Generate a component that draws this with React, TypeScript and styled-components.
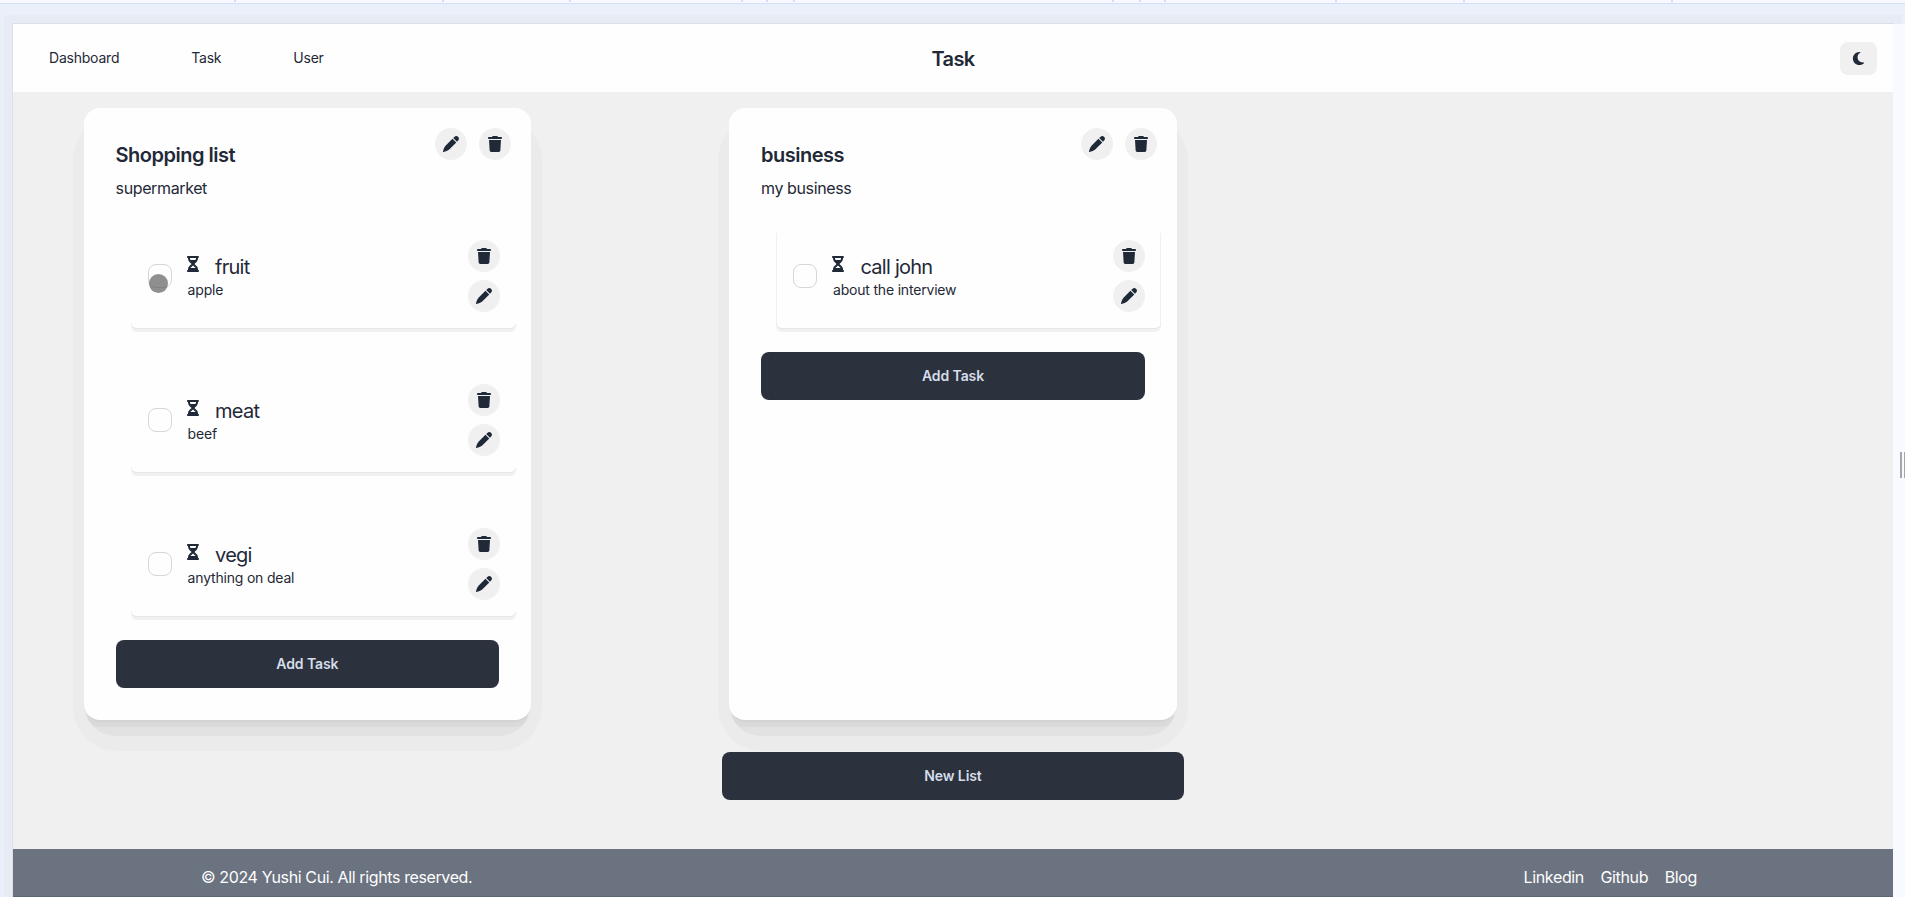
import React from "react";
import styled, { createGlobalStyle, css } from "styled-components";
import { FaTrash, FaHourglassHalf, FaMoon } from "react-icons/fa6";

const GlobalStyle = createGlobalStyle`
  *, *::before, *::after { box-sizing: border-box; }
  body {
    margin: 0;
    background: #eaf0fa;
    color: #1f2937;
    font-family: Inter, "Liberation Sans", sans-serif;
    font-size: 16px;
    line-height: 24px;
    overflow: hidden;
  }
  h1, h2, h3, p { margin: 0; }
  button { font: inherit; color: inherit; border: 0; padding: 0; cursor: pointer; }
  svg { display: block; }
`;

const Page = styled.div`
  height: 897px;
  display: flex;
  flex-direction: column;
`;

const RulerStrip = styled.svg`
  flex: none;
  width: 1905px;
  height: 4px;
`;

const Stage = styled.div`
  flex: 1;
  min-height: 0;
  display: flex;
  padding-top: 20px;
`;

const Screen = styled.div`
  width: 1880px;
  margin-left: 13px;
  height: 873px;
  display: flex;
  flex-direction: column;
  background: #f0f0f0;
  box-shadow: 0 0 0 1px #dbdfe6, 0 0 0 9px #e7ecf4;
`;

const ResizeGutter = styled.div`
  position: relative;
  flex: 1;
  display: flex;
  align-items: center;
  justify-content: flex-end;
  gap: 2px;
  padding-top: 9px;
  background: #f8faff;
`;

const GripBar = styled.span<{ $width: number }>`
  width: ${(p) => p.$width}px;
  height: 26px;
  background: #a6a6a6;
`;

const Header = styled.header`
  flex: none;
  height: 68px;
  display: grid;
  grid-template-columns: 1fr auto 1fr;
  align-items: center;
  padding: 0 16px 0 36px;
  background: #fefefe;
`;

const Nav = styled.nav`
  display: flex;
  gap: 72px;
  font-size: 14px;
  line-height: 20px;
  letter-spacing: -0.22px;
`;

const PageTitle = styled.h1`
  padding-top: 1px;
  font-size: 20px;
  line-height: 28px;
  font-weight: 600;
  letter-spacing: -0.6px;
  margin-left: -20px;
`;

const ThemeButton = styled.button`
  justify-self: end;
  width: 37px;
  height: 33px;
  display: grid;
  place-items: center;
  border-radius: 8px;
  background: #f0f0f0;
`;

const Board = styled.main`
  flex: none;
  height: 757px;
  padding-top: 16px;
`;

const Columns = styled.div`
  display: grid;
  grid-template-columns: 447.6px 448px;
  column-gap: 197.8px;
  padding-left: 70.6px;
`;

const CardShell = styled.section`
  position: relative;
  isolation: isolate;
  height: 612px;

  &::before,
  &::after {
    content: "";
    position: absolute;
    z-index: -1;
  }
  &::before {
    inset: 8px -11px -31px;
    border-radius: 44px;
    background: #ebebeb;
  }
  &::after {
    inset: 40px 0 -16px;
    border-radius: 32px;
    background: #e2e2e2;
  }
`;

const CardBody = styled.div`
  height: 100%;
  padding: 32px;
  border-radius: 16px;
  background: #fefefe;
  box-shadow: 0 5px 0 -3px #d3d3d3, 0 10px 0 -3px #dadada;
`;

const CardHeader = styled.div`
  display: flex;
  justify-content: space-between;
  align-items: flex-start;
  height: 32px;
`;

const CardTitle = styled.h2`
  padding-top: 1px;
  font-size: 20px;
  line-height: 28px;
  font-weight: 600;
  letter-spacing: -0.5px;
`;

const CardActions = styled.div`
  display: flex;
  gap: 12px;
  margin: -12px -12px 0 0;
`;

const CircleButton = styled.button`
  width: 32px;
  height: 32px;
  display: grid;
  place-items: center;
  border-radius: 50%;
  background: #f0f0f0;
`;

const CardSubtitle = styled.p`
  margin-top: 4px;
  letter-spacing: -0.38px;
`;

const TaskList = styled.div`
  display: flex;
  flex-direction: column;
  gap: 40px;
  width: 385px;
  margin: 24px 0 24px 15.5px;
`;

const TaskItem = styled.article<{ $outlined?: boolean }>`
  display: flex;
  align-items: center;
  height: 104px;
  padding: 16px 16px 16px 16.6px;
  border-radius: 0 0 6px 6px;
  background: #fefefe;
  box-shadow: 0 1px 0 #e6e6e6, 0 4px 0 #f1f1f1;
  ${(p) =>
    p.$outlined &&
    css`
      background:
        linear-gradient(#f0f0f0, #f0f0f0) 0 9px / 1px 100% no-repeat,
        linear-gradient(#f0f0f0, #f0f0f0) 100% 9px / 1px 100% no-repeat,
        #fefefe;
    `}
`;

const Checkbox = styled.span`
  position: relative;
  flex: none;
  width: 24px;
  height: 24px;
  border: 1px solid #d6d6d6;
  border-radius: 8px;
`;

const TouchDot = styled.span`
  position: absolute;
  left: 0.4px;
  top: 9px;
  width: 19px;
  height: 19px;
  border-radius: 50%;
  background: rgba(90, 90, 90, 0.68);
`;

const TaskText = styled.div`
  flex: 1;
  padding-left: 15.9px;
`;

const TaskName = styled.div`
  display: flex;
  align-items: flex-start;
  gap: 15.5px;
  height: 28px;
`;

const StatusIcon = styled(FaHourglassHalf)`
  width: 12px;
  height: 16px;
  margin: 4px 0.5px 0 -0.5px;
`;

const TaskTitle = styled.h3`
  padding-top: 1px;
  font-size: 20px;
  line-height: 28px;
  font-weight: 400;
  letter-spacing: -0.75px;
`;

const TaskNote = styled.p`
  font-size: 14px;
  line-height: 20px;
  letter-spacing: -0.19px;
`;

const TaskActions = styled.div`
  display: flex;
  flex-direction: column;
  gap: 8px;
`;

const PrimaryButton = styled.button<{ $width?: string }>`
  display: block;
  width: ${(p) => p.$width ?? "100%"};
  height: 48px;
  border-radius: 8px;
  background: #2b323e;
  color: #d6dde8;
  font-size: 14px;
  font-weight: 600;
  line-height: 20px;
  letter-spacing: -0.1px;
`;

const NewListRow = styled.div`
  display: flex;
  justify-content: center;
  margin-top: 32px;
`;

const Footer = styled.footer`
  flex: 1;
  display: flex;
  justify-content: space-between;
  align-items: center;
  padding: 9px 196px 0 188px;
  background: #6b7280;
  border-bottom: 1px solid #5f6673;
  color: #fefefe;
  letter-spacing: -0.38px;
`;

const FooterLinks = styled.div`
  display: flex;
  gap: 16.5px;
  letter-spacing: -0.35px;
`;

function PencilIcon() {
  return (
    <svg width="16" height="16" viewBox="0 0 16 16" fill="currentColor" aria-hidden="true">
      <path d="M9.4 2.7 13.3 6.6 6.2 13.6C4.9 14.8 2.7 15.6.4 16-.1 16.1-.1 15.9 0 15.6.4 13.3 1.3 11 2.5 9.7Z" />
      <path d="M10.2 2 11.6.7C12.7-.3 14-.2 15 .8 16.2 1.9 16.3 3.2 15.3 4.3L14 5.8Z" />
    </svg>
  );
}

type Task = { name: string; note: string; touched?: boolean };
type List = { title: string; subtitle: string; tasks: Task[]; outlined?: boolean };

const lists: List[] = [
  {
    title: "Shopping list",
    subtitle: "supermarket",
    tasks: [
      { name: "fruit", note: "apple", touched: true },
      { name: "meat", note: "beef" },
      { name: "vegi", note: "anything on deal" },
    ],
  },
  {
    title: "business",
    subtitle: "my business",
    outlined: true,
    tasks: [{ name: "call john", note: "about the interview" }],
  },
];

const rulerTicks = [234, 442, 569, 741, 766, 793, 1112, 1139, 1164, 1335, 1463, 1671];

function ListCard({ list }: { list: List }) {
  return (
    <CardShell>
      <CardBody>
        <CardHeader>
          <CardTitle>{list.title}</CardTitle>
          <CardActions>
            <CircleButton aria-label="Edit list"><PencilIcon /></CircleButton>
            <CircleButton aria-label="Delete list"><FaTrash size={16} /></CircleButton>
          </CardActions>
        </CardHeader>
        <CardSubtitle>{list.subtitle}</CardSubtitle>
        <TaskList>
          {list.tasks.map((task) => (
            <TaskItem key={task.name} $outlined={list.outlined}>
              <Checkbox>{task.touched && <TouchDot />}</Checkbox>
              <TaskText>
                <TaskName>
                  <StatusIcon />
                  <TaskTitle>{task.name}</TaskTitle>
                </TaskName>
                <TaskNote>{task.note}</TaskNote>
              </TaskText>
              <TaskActions>
                <CircleButton aria-label="Delete task"><FaTrash size={16} /></CircleButton>
                <CircleButton aria-label="Edit task"><PencilIcon /></CircleButton>
              </TaskActions>
            </TaskItem>
          ))}
        </TaskList>
        <PrimaryButton>Add Task</PrimaryButton>
      </CardBody>
    </CardShell>
  );
}

export default function App() {
  return (
    <Page>
      <GlobalStyle />
      <RulerStrip viewBox="0 0 1905 4" shapeRendering="crispEdges">
        <rect width="1905" height="3" fill="#f7f9fe" />
        {rulerTicks.map((x) => (
          <rect key={x} x={x} width="1.5" height="2" fill="#cfdffa" />
        ))}
        <rect y="3" width="1905" height="1" fill="#d3e0f8" />
      </RulerStrip>
      <Stage>
        <Screen>
          <Header>
            <Nav>
              <span>Dashboard</span>
              <span>Task</span>
              <span>User</span>
            </Nav>
            <PageTitle>Task</PageTitle>
            <ThemeButton aria-label="Dark mode"><FaMoon size={15} /></ThemeButton>
          </Header>
          <Board>
            <Columns>
              {lists.map((list) => (
                <ListCard key={list.title} list={list} />
              ))}
            </Columns>
            <NewListRow>
              <PrimaryButton $width="462px">New List</PrimaryButton>
            </NewListRow>
          </Board>
          <Footer>
            <span>© 2024 Yushi Cui. All rights reserved.</span>
            <FooterLinks>
              <span>Linkedin</span>
              <span>Github</span>
              <span>Blog</span>
            </FooterLinks>
          </Footer>
        </Screen>
        <ResizeGutter>
          <GripBar $width={2} />
          <GripBar $width={1} />
        </ResizeGutter>
      </Stage>
    </Page>
  );
}
